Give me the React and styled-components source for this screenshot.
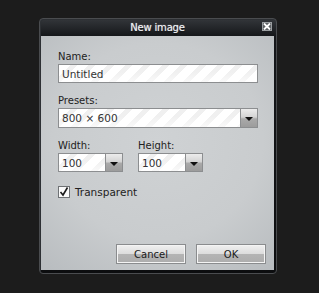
import React from "react";
import styled, { createGlobalStyle } from "styled-components";

const Global = createGlobalStyle`
  html, body { margin: 0; padding: 0; background: #1c1c1c; }
  body { width: 319px; height: 293px; overflow: hidden; font-family: "DejaVu Sans", Verdana, sans-serif; }
`;

const Page = styled.div`
  padding: 18px 0 0 39px;
`;

const Dialog = styled.div`
  width: 238px;
  height: 256px;
  box-sizing: border-box;
  border: 1px solid #4a4c4f;
  border-radius: 4px;
  background: linear-gradient(#33363a, #15171a 17px, #0c0d0f);
  display: flex;
  flex-direction: column;
  padding: 0 2px 3px 1px;
  box-shadow: inset 1px 1px 0 #2d3034;
`;

const TitleBar = styled.div`
  height: 17px;
  position: relative;
  display: flex;
  align-items: center;
  justify-content: center;
  color: #eceef0;
  font-size: 10px;
  letter-spacing: -0.2px;
  text-shadow: 0 0 1px #c0c4c8, 0 1px 1px #000;
`;

const Close = styled.div`
  position: absolute;
  right: 2px;
  top: 3px;
  width: 10px;
  height: 9px;
  box-sizing: border-box;
  border: 1px solid #9a9ea1;
  background: #5e6164;
  display: flex;
  align-items: center;
  justify-content: center;
`;

const Content = styled.div`
  flex: 1;
  display: flex;
  flex-direction: column;
  padding: 14px 8px 6px 17px;
  background: radial-gradient(ellipse 75% 70% at 50% 45%, #cfd2d4 0%, #c9ccce 60%, #b9bdc0 100%);
`;

const Label = styled.div`
  height: 13px;
  line-height: 13px;
  font-size: 10px;
  color: #222;
  margin-top: ${(p) => p.$mt || 0}px;
  margin-bottom: 1px;
`;

const stripes = `
  background:
    linear-gradient(rgba(255,255,255,0) 40%, rgba(255,255,255,0.6) 100%),
    repeating-linear-gradient(135deg, #ffffff 0px, #ffffff 8px, #f0f0f0 8px, #f0f0f0 13px);
`;

const TextBox = styled.div`
  width: ${(p) => p.$w}px;
  height: ${(p) => p.$h}px;
  box-sizing: border-box;
  border: 1px solid #8c8e90;
  ${stripes}
  display: flex;
  align-items: center;
  padding-left: 3px;
  font-size: 10.5px;
  color: #333;
`;

const Select = styled.div`
  width: ${(p) => p.$w}px;
  height: ${(p) => p.$h}px;
  box-sizing: border-box;
  border: 1px solid #8c8e90;
  display: flex;
`;

const SelectValue = styled.div`
  flex: 1;
  ${stripes}
  display: flex;
  align-items: center;
  padding-left: 3px;
  font-size: 10.5px;
  color: #333;
`;

const Arrow = styled.div`
  width: 17px;
  box-sizing: border-box;
  border-left: 1px solid #8c8e90;
  background: linear-gradient(#ececec, #d4d4d4 45%, #a9a9a9 55%, #9c9c9c);
  display: flex;
  align-items: center;
  justify-content: center;
  padding-top: 2px;
  &::after {
    content: "";
    border-left: 4px solid transparent;
    border-right: 4px solid transparent;
    border-top: 4px solid #111;
  }
`;

const Row = styled.div`
  display: flex;
  gap: ${(p) => p.$gap || 0}px;
  margin-top: ${(p) => p.$mt || 0}px;
`;

const Col = styled.div`
  display: flex;
  flex-direction: column;
`;

const CheckRow = styled.label`
  display: flex;
  align-items: center;
  gap: 5px;
  margin-top: 14px;
  font-size: 10.5px;
  color: #222;
`;

const CheckBox = styled.div`
  width: 12px;
  height: 12px;
  box-sizing: border-box;
  border: 1px solid #6f7275;
  background: #fafafa;
  display: flex;
  align-items: center;
  justify-content: center;
`;

const Buttons = styled.div`
  margin-top: auto;
  display: flex;
  justify-content: flex-end;
  gap: 10px;
`;

const Button = styled.div`
  width: 70px;
  height: 20px;
  box-sizing: border-box;
  border: 1px solid #8a8c8e;
  box-shadow: inset 0 0 0 1px #f4f4f4;
  background: linear-gradient(#f0f0f0, #dcdcdc 50%, #b4b4b4 52%, #adadad);
  display: flex;
  align-items: center;
  justify-content: center;
  font-size: 10px;
  color: #1a1a1a;
`;

export default function App() {
  return (
    <>
      <Global />
      <Page>
        <Dialog>
          <TitleBar>
            New image
            <Close>
              <svg width="8" height="7" viewBox="0 0 8 7">
                <path d="M1 0.5 L7 6.5 M7 0.5 L1 6.5" stroke="#fff" strokeWidth="1.8" />
              </svg>
            </Close>
          </TitleBar>
          <Content>
            <Label>Name:</Label>
            <TextBox $w={200} $h={19}>Untitled</TextBox>
            <Label $mt={11}>Presets:</Label>
            <Select $w={200} $h={20}>
              <SelectValue>800 × 600</SelectValue>
              <Arrow />
            </Select>
            <Row $gap={15} $mt={11}>
              <Col>
                <Label>Width:</Label>
                <Select $w={65} $h={19}>
                  <SelectValue>100</SelectValue>
                  <Arrow />
                </Select>
              </Col>
              <Col>
                <Label>Height:</Label>
                <Select $w={65} $h={19}>
                  <SelectValue>100</SelectValue>
                  <Arrow />
                </Select>
              </Col>
            </Row>
            <CheckRow>
              <CheckBox>
                <svg width="10" height="10" viewBox="0 0 10 10">
                  <path d="M1.5 5 L4 8 L8.5 0.5" stroke="#1a1a1a" strokeWidth="1.6" fill="none" />
                </svg>
              </CheckBox>
              Transparent
            </CheckRow>
            <Buttons>
              <Button>Cancel</Button>
              <Button>OK</Button>
            </Buttons>
          </Content>
        </Dialog>
      </Page>
    </>
  );
}
